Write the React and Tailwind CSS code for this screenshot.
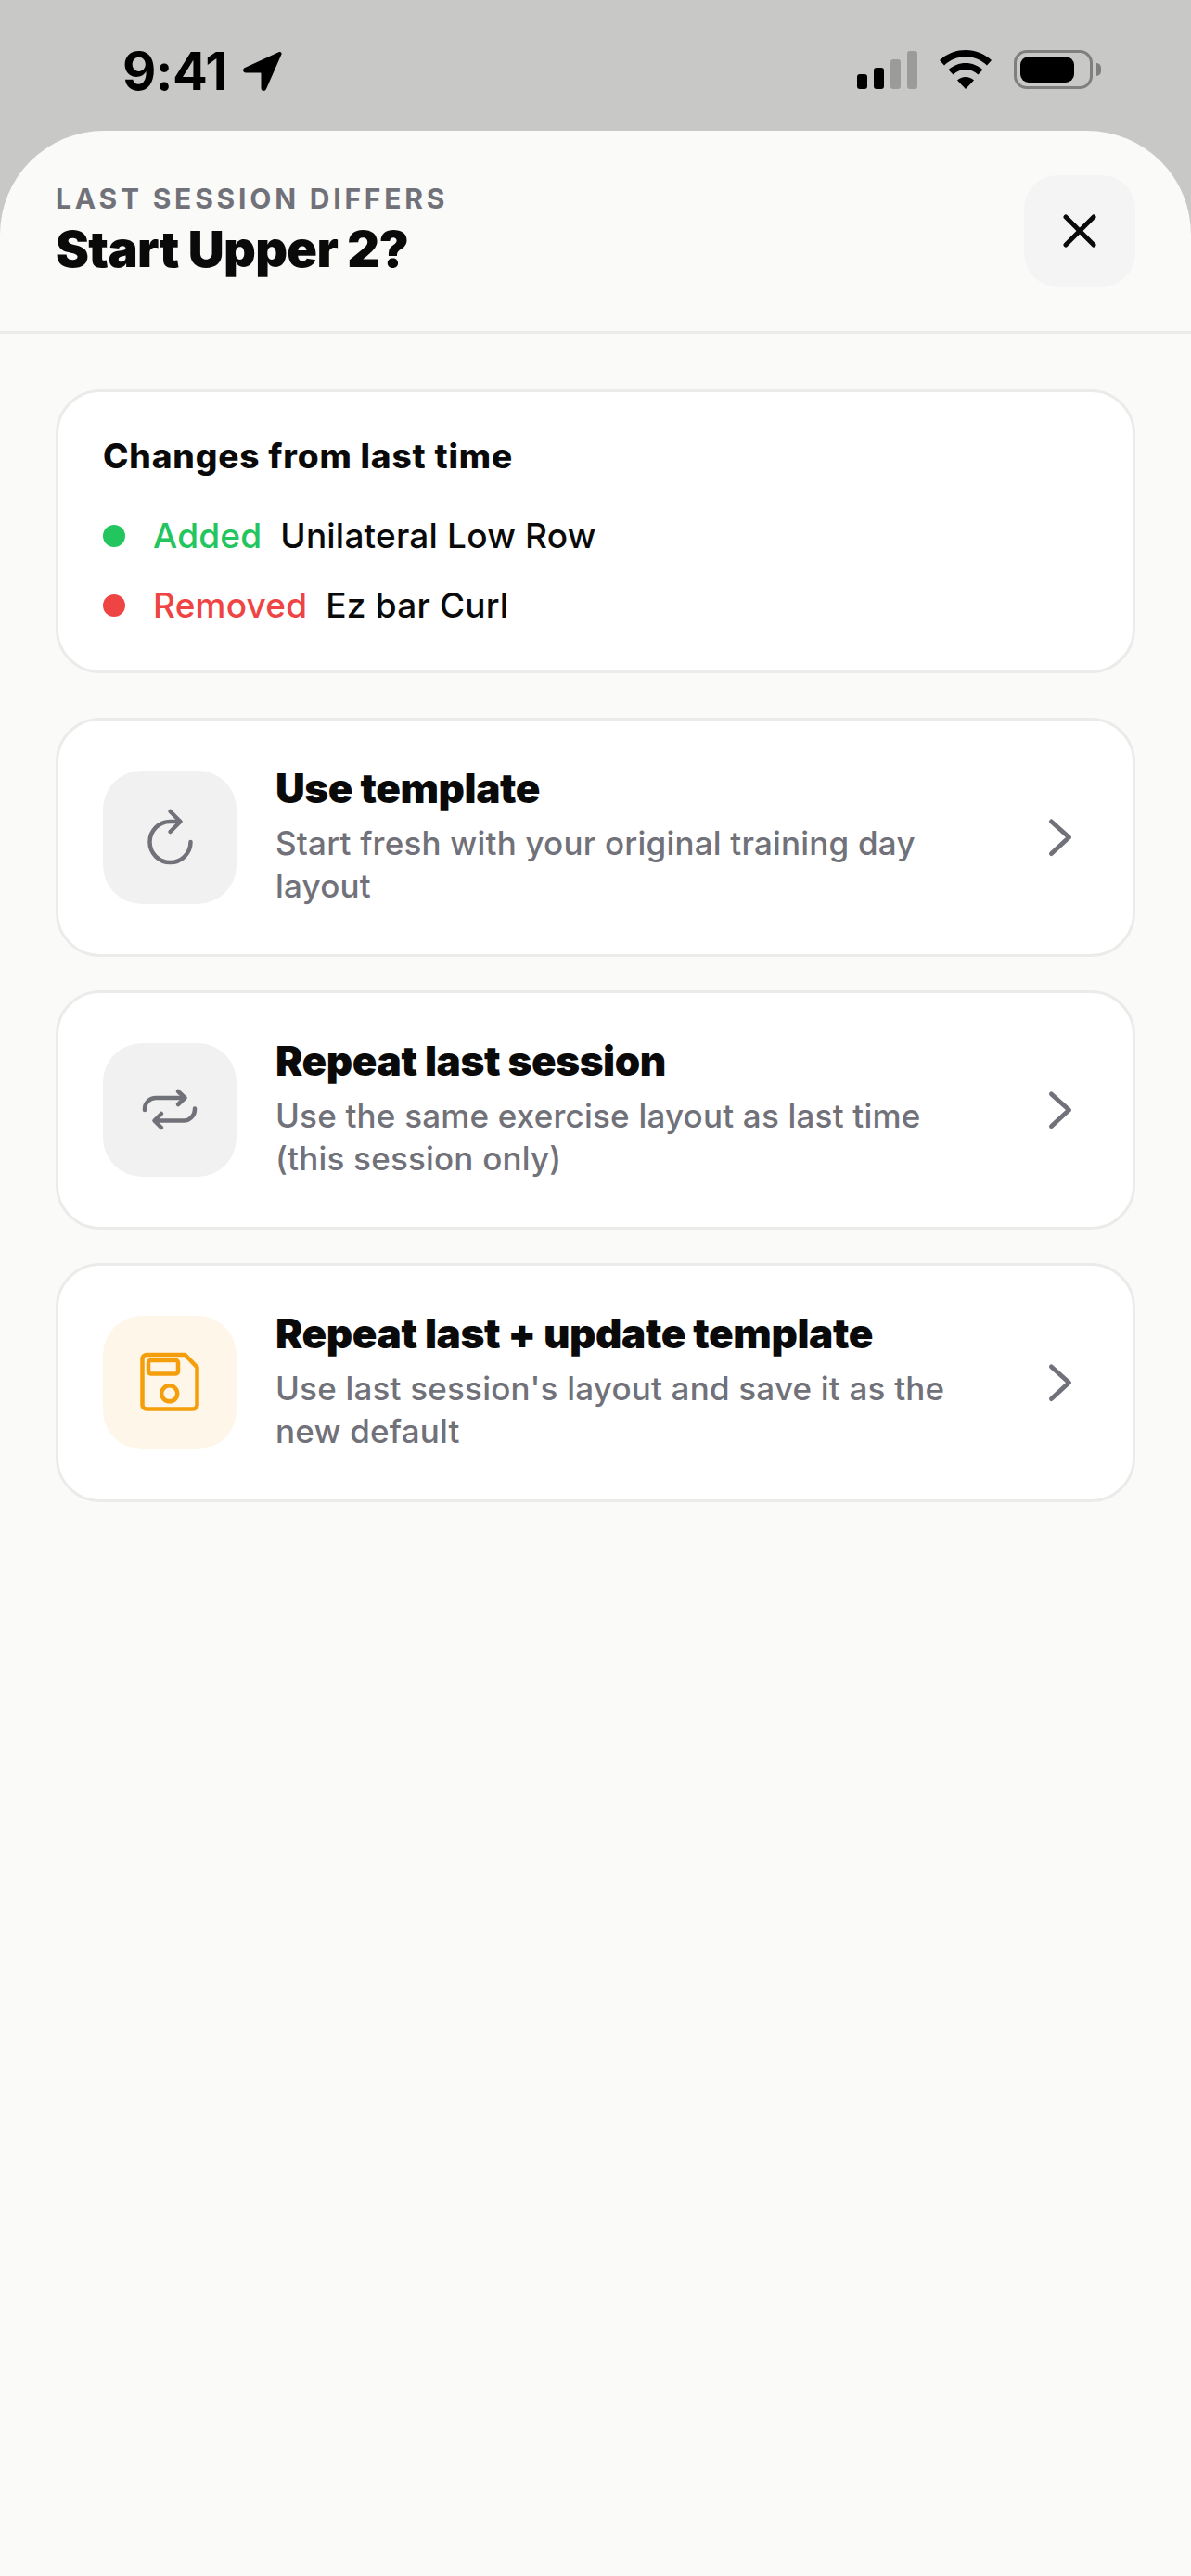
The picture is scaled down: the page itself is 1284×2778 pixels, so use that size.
function StatusBar() {
  return (
    <div className="h-[141px] flex items-start justify-between pl-[132px] pr-[97px] pt-[52px]">
      <div className="flex items-center gap-[14px]">
        <span className="text-[56px] leading-[50px] font-bold tracking-[-0.500px] text-black">9:41</span>
        <svg viewBox="0 0 46 44" className="w-[46px] h-[44px]">
          <path d="M42 1 5 18c-3 1.300-2.200 5.500 1 5.500h15.500c.6 0 1 .4 1 1V40c0 3.300 4.200 4 5.500 1L44.500 3.500c.6-1.500-1-3-2.500-2.500z" fill="black" />
        </svg>
      </div>
      <div className="flex items-start gap-[23px] pt-[3px]">
        <div className="flex items-end gap-[7px] h-[41px]">
          <div className="w-[11px] h-[16px] rounded-[3px] bg-black" />
          <div className="w-[11px] h-[23px] rounded-[3px] bg-black" />
          <div className="w-[11px] h-[32px] rounded-[3px] bg-[#9b9b99]" />
          <div className="w-[11px] h-[41px] rounded-[3px] bg-[#9b9b99]" />
        </div>
        <svg viewBox="0 0 58 42" className="w-[58px] h-[42px] -mt-[1px]">
          <path d="M29 0C18 0 8.500 4.200 1 11l5 5.500C12.500 10.500 20.500 7 29 7s16.500 3.500 23 9.500l5-5.500C49.500 4.200 40 0 29 0z" fill="black" />
          <path d="M29 14c-7 0-13.500 2.700-18.500 7.200l5 5.300C19 23 23.800 21 29 21s10 2 13.500 5.500l5-5.300C42.500 16.700 36 14 29 14z" fill="black" />
          <path d="M29 29c-3.400 0-6.500 1.300-9 3.500L29 42l9-9.500c-2.500-2.200-5.600-3.500-9-3.500z" fill="black" />
        </svg>
        <div className="flex items-center gap-[4px] -mt-[1px]">
          <div className="w-[85px] h-[42px] rounded-[14px] border-[3px] border-[#7f7f7d] p-[4px]">
            <div className="w-[58px] h-full rounded-[9px] bg-black" />
          </div>
          <div className="w-[5px] h-[14px] rounded-r-[5px] bg-[#7f7f7d]" />
        </div>
      </div>
    </div>
  )
}

function SheetHeader() {
  return (
    <header className="flex items-center justify-between px-[60px] py-[48px] border-b-[3px] border-[#ebebea]">
      <div>
        <p className="text-[30px] leading-[36px] font-bold tracking-[3.800px] uppercase text-[#71717a]">Last session differs</p>
        <h1 className="mt-[4px] text-[54px] leading-[66px] font-black tracking-[-0.700px] text-[#0a0a0a]">Start Upper 2?</h1>
      </div>
      <button className="w-[120px] h-[120px] rounded-[36px] bg-[#f4f4f5] flex items-center justify-center">
        <svg viewBox="0 0 24 24" className="w-[60px] h-[60px]" fill="none" stroke="#0a0a0a" strokeWidth="2" strokeLinecap="round">
          <path d="M18 6 6 18" />
          <path d="m6 6 12 12" />
        </svg>
      </button>
    </header>
  )
}

function ChangeRow({ dot, tone, label, name }) {
  return (
    <div className="flex items-center text-[37px] leading-[54px] font-medium tracking-[0.200px]">
      <span className={`w-[24px] h-[24px] rounded-full mr-[30px] ${dot}`} />
      <span className={`mr-[20px] ${tone}`}>{label}</span>
      <span className="text-[#0a0a0a]">{name}</span>
    </div>
  )
}

function ChangesCard() {
  return (
    <section className="h-[306px] rounded-[48px] border-[3px] border-[#ebebea] bg-white px-[48px] pt-[46px]">
      <h2 className="text-[37px] leading-[45px] font-extrabold text-[#0a0a0a] tracking-[0.850px] mb-[37px]">Changes from last time</h2>
      <div className="flex flex-col gap-[21px]">
        <ChangeRow dot="bg-[#22c55e]" tone="text-[#22c55e]" label="Added" name="Unilateral Low Row" />
        <ChangeRow dot="bg-[#ef4444]" tone="text-[#ef4444]" label="Removed" name="Ez bar Curl" />
      </div>
    </section>
  )
}

function OptionCard({ icon, iconBg, title, desc }) {
  return (
    <button className="w-full flex items-center text-left rounded-[48px] border-[3px] border-[#ebebea] bg-white px-[48px] h-[258px]">
      <div className={`w-[144px] h-[144px] shrink-0 rounded-[42px] flex items-center justify-center ${iconBg}`}>{icon}</div>
      <div className="flex-1 ml-[42px] mr-[66px] pb-[6px]">
        <h3 className="text-[44px] leading-[54px] font-black tracking-[-0.400px] text-[#0a0a0a] mb-[9px]">{title}</h3>
        <p className="text-[35px] leading-[46px] font-medium text-[#71717a] tracking-[0.200px]">{desc}</p>
      </div>
      <svg viewBox="13 13 60 60" className="w-[60px] h-[60px] shrink-0" fill="none" stroke="#71717a" strokeWidth="5" strokeLinecap="round" strokeLinejoin="round">
        <path d="M33.500 26l19 17-19 17.500" />
      </svg>
    </button>
  )
}

export default function App() {
  return (
    <div className="min-h-[2778px] bg-[#c8c8c6]" style={{ fontFamily: 'Inter, sans-serif' }}>
      <StatusBar />
      <main className="min-h-[2637px] bg-[#fafaf8] rounded-t-[112px]">
        <SheetHeader />
        <div className="px-[60px] pt-[60px] flex flex-col">
          <ChangesCard />
          <div className="mt-[48px] flex flex-col gap-[36px]">
            <OptionCard
              iconBg="bg-[#f1f1f1]"
              title="Use template"
              desc="Start fresh with your original training day layout"
              icon={
                <svg viewBox="-2 -2 90 90" className="w-[90px] h-[90px]" fill="none" stroke="#71717a" strokeWidth="4.500" strokeLinecap="round" strokeLinejoin="round">
                  <path d="M65.500 48A22 22 0 1 1 43.500 26H54" />
                  <path d="M43.500 15l11 11-11 11" />
                </svg>
              }
            />
            <OptionCard
              iconBg="bg-[#f1f1f1]"
              title="Repeat last session"
              desc="Use the same exercise layout as last time (this session only)"
              icon={
                <svg viewBox="-2 -2.500 90 90" className="w-[90px] h-[90px]" fill="none" stroke="#71717a" strokeWidth="4.500" strokeLinecap="round" strokeLinejoin="round">
                  <path d="M16 42.500v-1a12 12 0 0 1 12-12H59" />
                  <path d="M52 22.500l7.500 7-7.500 7" />
                  <path d="M70 41v1a12 12 0 0 1-12 12H27" />
                  <path d="M34 46.500l-7.500 7.500 7.500 7.500" />
                </svg>
              }
            />
            <OptionCard
              iconBg="bg-[#fff6ea]"
              title="Repeat last + update template"
              desc="Use last session's layout and save it as the new default"
              icon={
                <svg viewBox="-2 -3.500 90 90" className="w-[90px] h-[90px]" fill="none" stroke="#f59e0b" strokeWidth="4.500" strokeLinecap="round" strokeLinejoin="round">
                  <path d="M18 11.500H59.500L72.500 25V65.500a4.500 4.500 0 0 1-4.500 4.500H18a4.500 4.500 0 0 1-4.500-4.500V16a4.500 4.500 0 0 1 4.500-4.500z" />
                  <rect x="20" y="17.500" width="32" height="14.500" rx="2.500" />
                  <circle cx="42.700" cy="53.300" r="8.500" />
                </svg>
              }
            />
          </div>
        </div>
      </main>
    </div>
  )
}
